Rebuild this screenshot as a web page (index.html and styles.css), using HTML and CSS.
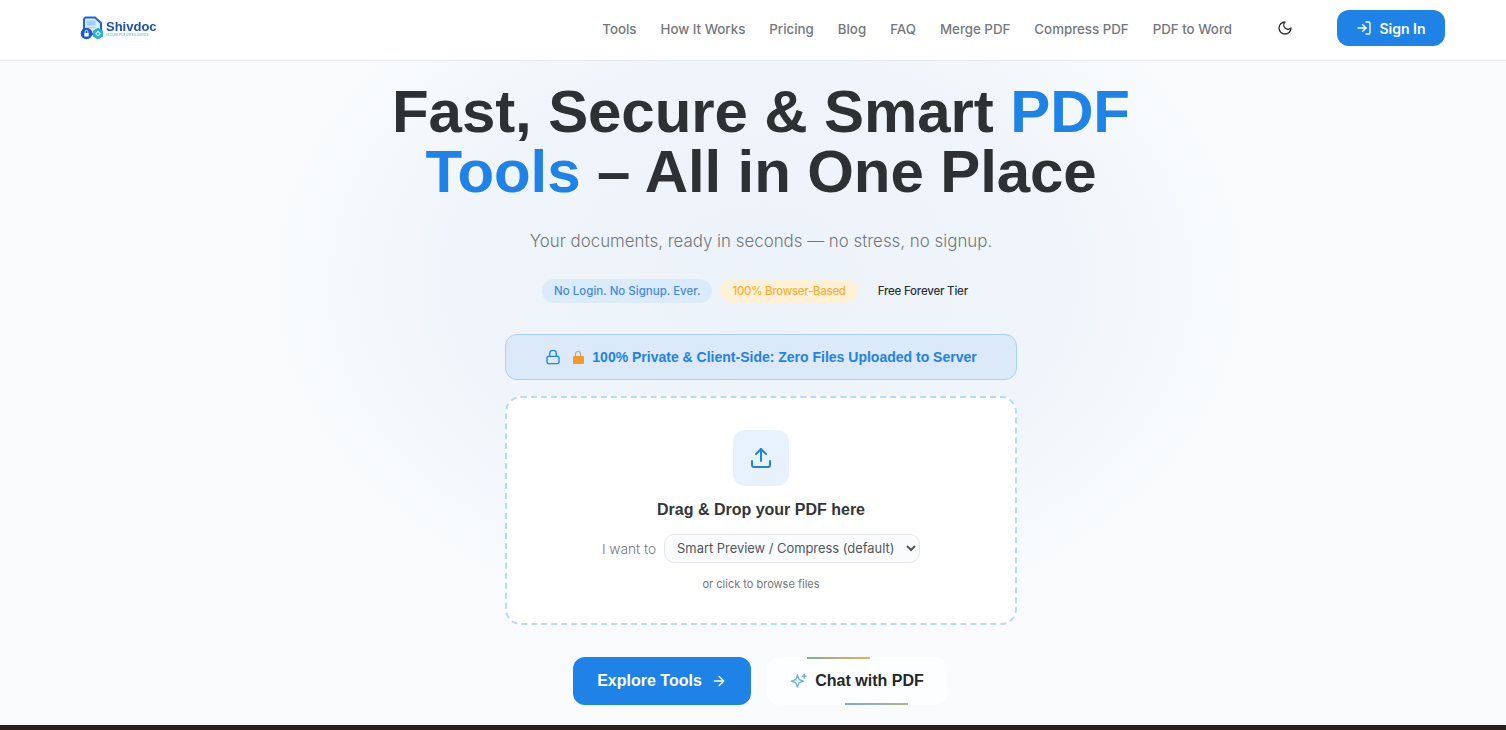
FILE: index.html
```html
<!DOCTYPE html>
<html lang="en">
<head>
    <meta charset="UTF-8">
    <meta name="viewport" content="width=device-width, initial-scale=1.0">
    <title>Shivdoc</title>
    <link rel="stylesheet" href="styles.css">
</head>
<body>
    <header class="topbar">
        <a class="logo" href="#">
            <svg class="logo-icon" width="24" height="25" viewBox="0 0 24 25">
                <path d="M4 3.500a2 2 0 0 1 2-2h9l6 5.500v9a2 2 0 0 1-2 2H6a2 2 0 0 1-2-2z" fill="#dcecfb" stroke="#1d63e0" stroke-width="2"/>
                <rect x="6.500" y="4.500" width="9" height="5" rx="1" fill="#9fd0f5"/>
                <path d="M7.500 11.500h8" stroke="#9fd0f5"/>
                <circle cx="6.500" cy="17.500" r="5.800" fill="#1d55d8"/>
                <rect x="4.300" y="17" width="4.400" height="3.400" rx=".5" fill="#fff"/>
                <path d="M5.100 17v-1.200a1.400 1.400 0 0 1 2.800 0V17" fill="none" stroke="#fff" stroke-width=".9"/>
                <path d="M18 11.800l5 2.900v5.800l-5 2.900-5-2.900v-5.800z" fill="#27b4c8"/>
                <path d="M18 14.800l2.800 2.800-2.800 2.800-2.800-2.800z" fill="#e4f8fa"/>
                <circle cx="18" cy="17.600" r="1.200" fill="#27b4c8"/>
            </svg>
            <span class="logo-text">
                <span class="logo-name">Shivdoc</span>
                <span class="logo-tag">SECURE PDF INTELLIGENCE</span>
            </span>
        </a>
        <nav class="nav">
            <a href="#">Tools</a>
            <a href="#">How It Works</a>
            <a href="#">Pricing</a>
            <a href="#">Blog</a>
            <a href="#">FAQ</a>
            <a href="#">Merge PDF</a>
            <a href="#">Compress PDF</a>
            <a href="#">PDF to Word</a>
        </nav>
        <svg class="moon" width="16" height="16" viewBox="0 0 24 24" fill="none" stroke="#2d3133" stroke-width="2" stroke-linecap="round" stroke-linejoin="round">
            <path d="M12 3a6 6 0 0 0 9 9 9 9 0 1 1-9-9z"/>
        </svg>
        <a class="signin" href="#">
            <svg width="16" height="16" viewBox="0 0 24 24" fill="none" stroke="currentColor" stroke-width="2" stroke-linecap="round" stroke-linejoin="round">
                <path d="M15 3h4a2 2 0 0 1 2 2v14a2 2 0 0 1-2 2h-4"/>
                <path d="M10 17l5-5-5-5"/>
                <path d="M15 12H3"/>
            </svg>
            Sign In
        </a>
    </header>

    <main class="hero">
        <h1>Fast, Secure &amp; Smart <span class="accent">PDF</span><br><span class="accent">Tools</span> – All in One Place</h1>
        <p class="lead">Your documents, ready in seconds — no stress, no signup.</p>
        <div class="pills">
            <span class="pill pill-blue">No Login. No Signup. Ever.</span>
            <span class="pill pill-amber">100% Browser-Based</span>
            <span class="pill pill-plain">Free Forever Tier</span>
        </div>
        <div class="private">
            <svg width="16" height="16" viewBox="0 0 24 24" fill="none" stroke="currentColor" stroke-width="2" stroke-linecap="round" stroke-linejoin="round">
                <rect x="3" y="11" width="18" height="11" rx="2"/>
                <path d="M7 11V7a5 5 0 0 1 10 0v4"/>
            </svg>
            <span class="private-text"><span class="emoji-lock"><i class="shackle"></i><i class="lock-body"></i></span>100% Private &amp; Client-Side: Zero Files Uploaded to Server</span>
        </div>
        <div class="dropzone">
            <div class="upload-icon">
                <svg width="24" height="24" viewBox="0 0 24 24" fill="none" stroke="currentColor" stroke-width="2" stroke-linecap="round" stroke-linejoin="round">
                    <path d="M12 3v12"/>
                    <path d="M17 8l-5-5-5 5"/>
                    <path d="M21 15v4a2 2 0 0 1-2 2H5a2 2 0 0 1-2-2v-4"/>
                </svg>
            </div>
            <p class="drop-title">Drag &amp; Drop your PDF here</p>
            <div class="want">
                <label for="mode">I want to</label>
                <select id="mode">
                    <option>Smart Preview / Compress (default)</option>
                    <option>Merge</option>
                </select>
            </div>
            <p class="browse">or click to browse files</p>
        </div>
        <div class="actions">
            <a class="btn-primary" href="#">
                Explore Tools
                <svg width="16" height="16" viewBox="0 0 24 24" fill="none" stroke="currentColor" stroke-width="2" stroke-linecap="round" stroke-linejoin="round">
                    <path d="M5 12h14"/>
                    <path d="M12 5l7 7-7 7"/>
                </svg>
            </a>
            <a class="btn-chat" href="#">
                <svg width="17" height="17" viewBox="0 0 24 24" fill="none" stroke="#6aaeee" stroke-width="2" stroke-linecap="round" stroke-linejoin="round">
                    <path d="M10 4l1.800 5.200a3 3 0 0 0 2 2L19 13l-5.200 1.800a3 3 0 0 0-2 2L10 22l-1.800-5.200a3 3 0 0 0-2-2L1 13l5.200-1.800a3 3 0 0 0 2-2z" transform="translate(1 -1) scale(.95)"/>
                    <path d="M20 2v5"/>
                    <path d="M17.500 4.500h5"/>
                </svg>
                Chat with PDF
            </a>
        </div>
    </main>
    <div class="dark-strip"></div>
</body>
</html>
```

FILE: styles.css
```css
html, body {
    height: 100%;
}

body {
    margin: 0;
    height: 730px;
    overflow: hidden;
    display: flex;
    flex-direction: column;
    font-family: "Inter", "Noto Sans", sans-serif;
    color: #2d3133;
    background-color: #f9fbfd;
    background-image: radial-gradient(ellipse 500px 360px at 760px 280px, #edf3fa 0%, #f0f5fb 60%, #f9fbfd 100%);
}

a {
    text-decoration: none;
    color: inherit;
}

.topbar {
    box-sizing: border-box;
    height: 61px;
    flex: none;
    display: flex;
    align-items: center;
    padding: 0 61px 4px 80px;
    background-color: #fff;
    border-bottom: 1px solid #e5e7eb;
}

.logo {
    display: flex;
    align-items: center;
    gap: 2px;
    filter: blur(0.3px);
}

.logo-text {
    display: flex;
    flex-direction: column;
    margin-top: 2px;
}

.logo-name {
    font-family: "Liberation Sans", Arial, sans-serif;
    font-size: 13px;
    line-height: 12px;
    font-weight: bold;
    color: #1d4fc0;
}

.logo-tag {
    font-size: 3px;
    line-height: 4px;
    letter-spacing: 0.1px;
    color: #2bb8c9;
    white-space: nowrap;
}

.nav {
    margin-left: auto;
    margin-top: 2px;
    display: flex;
    gap: 24px;
    font-size: 13.300px;
    font-weight: 500;
    color: #74787c;
}

.moon {
    margin-left: 45px;
    margin-right: 44px;
}

.signin {
    width: 108px;
    height: 36px;
    display: flex;
    align-items: center;
    justify-content: center;
    gap: 7px;
    border-radius: 12px;
    font-size: 14px;
    font-weight: 600;
    color: #fff;
    background-color: #1e82e6;
}

.hero {
    flex: 1;
    display: flex;
    flex-direction: column;
    align-items: center;
    padding-left: 16px;
}

h1 {
    margin: 21px 0 0;
    font-family: "Liberation Sans", Arial, sans-serif;
    font-size: 60px;
    line-height: 60px;
    font-weight: bold;
    letter-spacing: -0.1px;
    text-align: center;
    color: #2d3133;
}

.accent {
    color: #1e82e6;
}

.lead {
    margin: 27px 0 0;
    font-size: 16.900px;
    line-height: 24px;
    font-weight: 300;
    color: #74787c;
}

.pills {
    margin-top: 26px;
    display: flex;
    gap: 8px;
    font-size: 11.500px;
    font-weight: 500;
}

.pill {
    height: 24px;
    padding: 0 12px;
    display: flex;
    align-items: center;
    border-radius: 12px;
}

.pill-blue {
    color: #3f8ae6;
    background-color: #dcebfa;
}

.pill-amber {
    letter-spacing: -0.3px;
    color: #fcb030;
    background-color: #fdf1d8;
}

.pill-plain {
    letter-spacing: -0.2px;
    color: #2d3133;
}

.private {
    box-sizing: border-box;
    width: 512px;
    height: 46px;
    margin-top: 31px;
    display: flex;
    align-items: center;
    justify-content: center;
    gap: 11px;
    border: 1px solid #a9d0f5;
    border-radius: 12px;
    color: #1e82e6;
    background-color: #dbe9f9;
}

.private-text {
    display: flex;
    align-items: center;
    font-family: "Liberation Sans", Arial, sans-serif;
    font-size: 14px;
    font-weight: bold;
}

.emoji-lock {
    width: 12px;
    height: 13px;
    margin-right: 8px;
    display: flex;
    flex-direction: column;
    align-items: center;
}

.shackle {
    width: 6px;
    height: 5px;
    box-sizing: border-box;
    border: 1.500px solid #a8a8a8;
    border-bottom: none;
    border-radius: 3px 3px 0 0;
}

.lock-body {
    width: 11px;
    height: 8px;
    border-radius: 1px;
    background-color: #f39a2d;
}

.dropzone {
    box-sizing: border-box;
    width: 512px;
    height: 229px;
    margin-top: 16px;
    padding-top: 32px;
    display: flex;
    flex-direction: column;
    align-items: center;
    border: 2px dashed #b5dcf5;
    border-radius: 16px;
    background-color: #fff;
}

.upload-icon {
    width: 56px;
    height: 56px;
    display: flex;
    align-items: center;
    justify-content: center;
    border-radius: 12px;
    color: #1e82e6;
    background-color: #e8f2fd;
}

.drop-title {
    margin: 12px 0 0;
    font-family: "Liberation Sans", Arial, sans-serif;
    font-size: 16px;
    line-height: 24px;
    font-weight: bold;
    color: #33373a;
}

.want {
    margin-top: 12px;
    display: flex;
    align-items: center;
    gap: 8px;
    font-size: 13.700px;
    font-weight: 300;
    color: #74787c;
}

.want select {
    height: 29px;
    padding: 0 8px;
    font-family: inherit;
    font-size: 12.900px;
    color: #54585c;
    border: 1px solid #e5e7eb;
    border-radius: 10px;
    background-color: #f9fbfd;
}

.browse {
    margin: 13px 0 0;
    font-size: 11px;
    line-height: 16px;
    color: #74787c;
}

.actions {
    margin-top: 32px;
    margin-right: 2px;
    display: flex;
    gap: 16px;
}

.btn-primary {
    width: 178px;
    height: 48px;
    display: flex;
    align-items: center;
    justify-content: center;
    gap: 9px;
    border-radius: 12px;
    font-family: "Liberation Sans", Arial, sans-serif;
    font-size: 16px;
    font-weight: bold;
    color: #fff;
    background-color: #1e82e6;
}

.btn-chat {
    position: relative;
    width: 180px;
    height: 48px;
    display: flex;
    align-items: center;
    justify-content: center;
    gap: 8px;
    border-radius: 12px;
    font-family: "Liberation Sans", Arial, sans-serif;
    font-size: 16px;
    font-weight: bold;
    color: #24282c;
    background-color: #fdfeff;
}

.btn-chat::before,
.btn-chat::after {
    content: "";
    position: absolute;
    width: 63px;
    height: 2px;
}

.btn-chat::before {
    top: 0;
    left: 40px;
    background: linear-gradient(90deg, #8aa89a, #e3b45a);
}

.btn-chat::after {
    bottom: 0;
    left: 78px;
    background: linear-gradient(90deg, #7ba6e2, #b3b783);
}

.dark-strip {
    height: 5px;
    flex: none;
    background-color: #2a211c;
}
```
